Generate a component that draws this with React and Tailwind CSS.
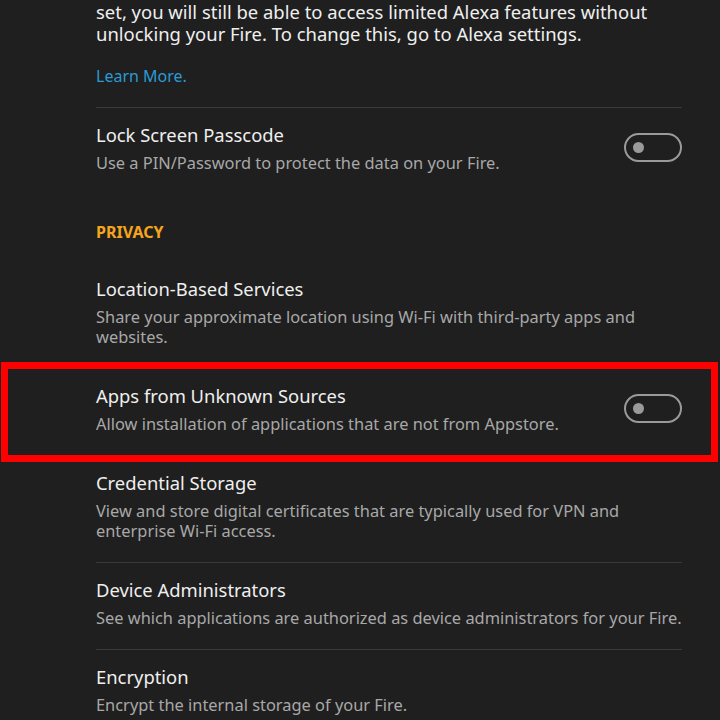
import React from "react";

function Toggle() {
  return (
    <div className="relative w-[58px] h-[29px] shrink-0 rounded-full border-2 border-[#9a9a9a]">
      <div className="absolute left-[7px] top-[7px] w-[11px] h-[11px] rounded-full bg-[#9a9a9a]" />
    </div>
  );
}

function Row({ title, lines, toggle, border = true, children }) {
  return (
    <div className={"relative flex items-center gap-4 pt-[14px] pb-[21px] " + (border ? "border-b border-[#3a3a3a]" : "")}>
      <div className="flex-1 min-w-0">
        <div className="text-[18.4px] leading-[26px] text-[#efefef]">{title}</div>
        <div className="mt-[5px] text-[16.4px] leading-[20px] text-[#a8a8a8] whitespace-nowrap">
          {lines.map((l, i) => (
            <div key={i}>{l}</div>
          ))}
        </div>
      </div>
      {toggle && <Toggle />}
      {children}
    </div>
  );
}

export default function App() {
  return (
    <div
      className="w-[720px] h-[720px] overflow-hidden bg-[#1f1f1f] pl-[96px] pr-[38px]"
      style={{ fontFamily: '"Noto Sans", sans-serif' }}
    >
      <div className="pt-[1px] text-[18.45px] leading-[22px] text-[#efefef] whitespace-nowrap">
        <div>set, you will still be able to access limited Alexa features without</div>
        <div>unlocking your Fire. To change this, go to Alexa settings.</div>
      </div>
      <div className="mt-[20px] text-[16px] leading-[22px] text-[#2b9ad4]">Learn More.</div>
      <div className="mt-[20px] h-px bg-[#3a3a3a]" />
      <Row
        title="Lock Screen Passcode"
        lines={["Use a PIN/Password to protect the data on your Fire."]}
        toggle
        border={false}
      />
      <div className="mt-[28px] text-[16px] leading-[20px] font-bold text-[#f5a51c]">PRIVACY</div>
      <div className="h-[20px]" />
      <Row
        title="Location-Based Services"
        lines={["Share your approximate location using Wi-Fi with third-party apps and", "websites."]}
      />
      <Row
        title="Apps from Unknown Sources"
        lines={["Allow installation of applications that are not from Appstore."]}
        toggle
      >
        <div className="pointer-events-none absolute -left-[95px] -right-[36px] -top-[7px] -bottom-[7px] border-[7px] border-[#ff0000]" />
      </Row>
      <Row
        title="Credential Storage"
        lines={["View and store digital certificates that are typically used for VPN and", "enterprise Wi-Fi access."]}
      />
      <Row
        title="Device Administrators"
        lines={["See which applications are authorized as device administrators for your Fire."]}
      />
      <Row title="Encryption" lines={["Encrypt the internal storage of your Fire."]} border={false} />
    </div>
  );
}
